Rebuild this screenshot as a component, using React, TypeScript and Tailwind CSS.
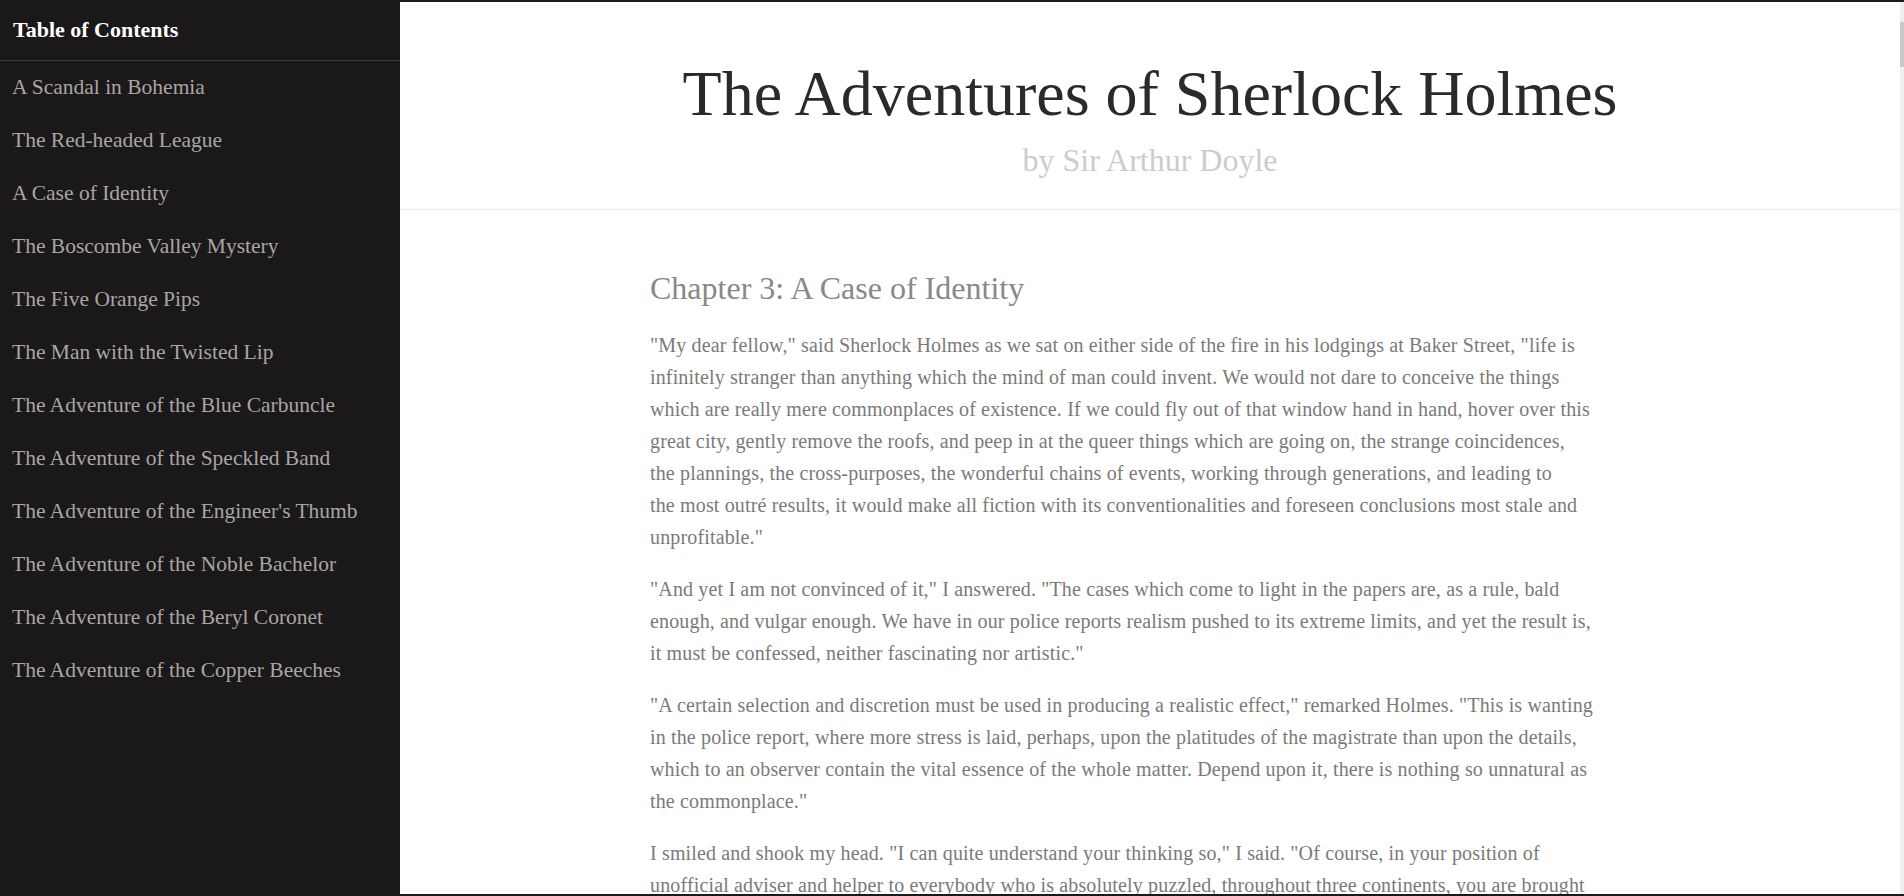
const chapters = [
  "A Scandal in Bohemia",
  "The Red-headed League",
  "A Case of Identity",
  "The Boscombe Valley Mystery",
  "The Five Orange Pips",
  "The Man with the Twisted Lip",
  "The Adventure of the Blue Carbuncle",
  "The Adventure of the Speckled Band",
  "The Adventure of the Engineer's Thumb",
  "The Adventure of the Noble Bachelor",
  "The Adventure of the Beryl Coronet",
  "The Adventure of the Copper Beeches",
];

const paragraphs = [
  [
    `"My dear fellow," said Sherlock Holmes as we sat on either side of the fire in his lodgings at Baker Street, "life is`,
    `infinitely stranger than anything which the mind of man could invent. We would not dare to conceive the things`,
    `which are really mere commonplaces of existence. If we could fly out of that window hand in hand, hover over this`,
    `great city, gently remove the roofs, and peep in at the queer things which are going on, the strange coincidences,`,
    `the plannings, the cross-purposes, the wonderful chains of events, working through generations, and leading to`,
    `the most outré results, it would make all fiction with its conventionalities and foreseen conclusions most stale and`,
    `unprofitable."`,
  ],
  [
    `"And yet I am not convinced of it," I answered. "The cases which come to light in the papers are, as a rule, bald`,
    `enough, and vulgar enough. We have in our police reports realism pushed to its extreme limits, and yet the result is,`,
    `it must be confessed, neither fascinating nor artistic."`,
  ],
  [
    `"A certain selection and discretion must be used in producing a realistic effect," remarked Holmes. "This is wanting`,
    `in the police report, where more stress is laid, perhaps, upon the platitudes of the magistrate than upon the details,`,
    `which to an observer contain the vital essence of the whole matter. Depend upon it, there is nothing so unnatural as`,
    `the commonplace."`,
  ],
  [
    `I smiled and shook my head. "I can quite understand your thinking so," I said. "Of course, in your position of`,
    `unofficial adviser and helper to everybody who is absolutely puzzled, throughout three continents, you are brought`,
    `in contact with all that is strange and bizarre. But here"—I picked up the morning paper from the ground—"let us`,
    `put it to a practical test. Here is the first heading upon which I come. 'A husband's cruelty to his wife.' There is`,
    `half a column of print, but I know without reading it that it is all perfectly familiar to me."`,
  ],
];

export default function App() {
  return (
    <div className="flex h-[896px] overflow-hidden border-y-2 border-[#1a1a1a] font-['Liberation_Serif',serif]">
      <aside className="w-[400px] shrink-0 bg-[#1b1819]">
        <div className="h-[59px] border-b border-[#3a3637] px-[13px] pt-[13px] text-[22px] font-semibold leading-[30px] text-white">
          Table of Contents
        </div>
        <ul>
          {chapters.map((c) => (
            <li key={c} className="px-[12px] py-[12px] text-[21.5px] leading-[29px] text-[#a9a5a5]">
              {c}
            </li>
          ))}
        </ul>
      </aside>
      <main className="h-full flex-1 overflow-y-auto bg-white">
        <header className="border-b border-[#ececec] pb-[30px] pt-[55px] text-center">
          <h1 className="text-[64px] leading-[74px] text-[#2a2a2a]">The Adventures of Sherlock Holmes</h1>
          <p className="mt-[10px] text-[32px] leading-[38px] text-[#cccccc]">by Sir Arthur Doyle</p>
        </header>
        <section className="mx-auto max-w-[1000px] pt-[59px] pb-10">
          <h2 className="mb-[22px] text-[32px] leading-[38px] text-[#888888]">Chapter 3: A Case of Identity</h2>
          {paragraphs.map((lines, i) => (
            <p key={i} className="mb-[20px] text-[20px] leading-[32px] tracking-[0.15px] text-[#7a7a7a]">
              {lines.map((l, j) => (
                <span key={j} className="block whitespace-nowrap">
                  {l}
                </span>
              ))}
            </p>
          ))}
        </section>
      </main>
      {/* scrollbar */}
      <div className="w-[4px] shrink-0 bg-[#efefef]">
        <div className="mt-[20px] h-[45px] w-full bg-[#c8c8c8]" />
      </div>
    </div>
  );
}
